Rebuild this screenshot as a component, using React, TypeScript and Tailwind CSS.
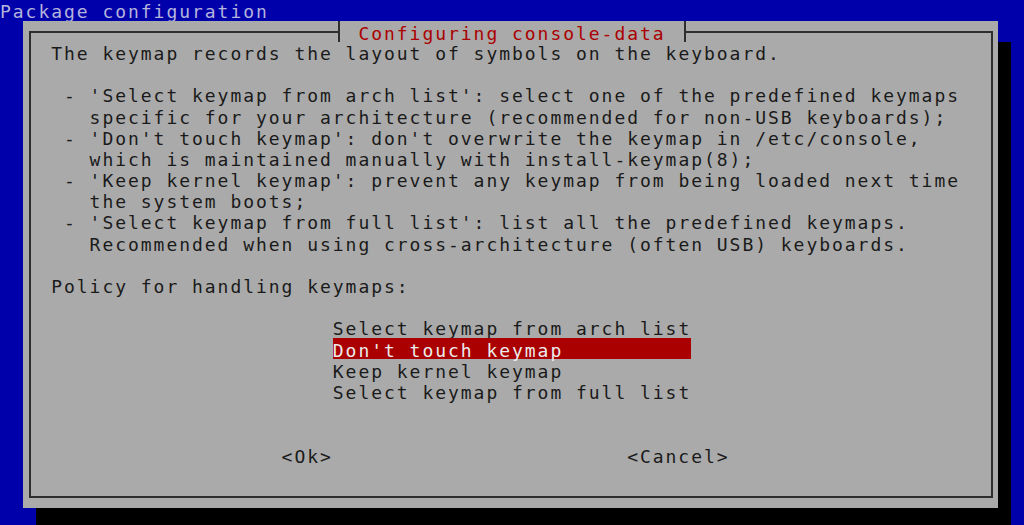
const intro = [
  'The keymap records the layout of symbols on the keyboard.',
  '',
  " - 'Select keymap from arch list': select one of the predefined keymaps",
  '   specific for your architecture (recommended for non-USB keyboards);',
  " - 'Don't touch keymap': don't overwrite the keymap in /etc/console,",
  '   which is maintained manually with install-keymap(8);',
  " - 'Keep kernel keymap': prevent any keymap from being loaded next time",
  '   the system boots;',
  " - 'Select keymap from full list': list all the predefined keymaps.",
  '   Recommended when using cross-architecture (often USB) keyboards.',
  '',
  'Policy for handling keymaps:',
  '',
];

const choices = [
  'Select keymap from arch list',
  "Don't touch keymap",
  'Keep kernel keymap',
  'Select keymap from full list',
];

const selected = 1;

export default function App() {
  return (
    <div className="w-[1024px] h-[525px] overflow-hidden bg-[#0000aa] font-['DejaVu_Sans_Mono','Liberation_Mono',monospace] text-[18px] tracking-[1.963px] leading-[21.2px]">
      <div className="h-[21px] pt-px whitespace-pre text-[#b4b4dc]">Package configuration</div>

      <div className="relative ml-[23px] w-[975px] h-[487px] pt-[10px] pl-[6px] bg-[#aaaaaa] shadow-[13px_21px_0_0_#000]">
        <div className="absolute left-[315px] top-0 h-[21px] pt-[1.5px] px-[18.4px] border-x-2 border-[#2e2e2e] bg-[#aaaaaa] whitespace-pre text-[#aa0000]">
          Configuring console-data
        </div>

        <div className="w-[964px] h-[467px] border-2 border-[#2e2e2e] pt-[8.2px] pl-[20.2px] text-[#1a1a1a]">
          {intro.map((line, i) => (
            <div key={i} className="h-[21.2px] pt-[1.8px] whitespace-pre">
              {line}
            </div>
          ))}

          <div className="flex flex-col ml-[281.6px]">
            {choices.map((c, i) => (
              <div
                key={c}
                className={
                  i === selected
                    ? 'h-[21.2px] pt-[1.8px] w-[358.4px] whitespace-pre bg-[#aa0000] text-[#ececec]'
                    : 'h-[21.2px] pt-[1.8px] w-[358.4px] whitespace-pre'
                }
              >
                {c}
              </div>
            ))}
          </div>

          <div className="h-[42.4px]" />

          <div className="h-[21.2px] pt-[1.8px] flex">
            <span className="ml-[230.4px] whitespace-pre">{'<Ok>'}</span>
            <span className="ml-[294.4px] whitespace-pre">{'<Cancel>'}</span>
          </div>
        </div>
      </div>
    </div>
  );
}
